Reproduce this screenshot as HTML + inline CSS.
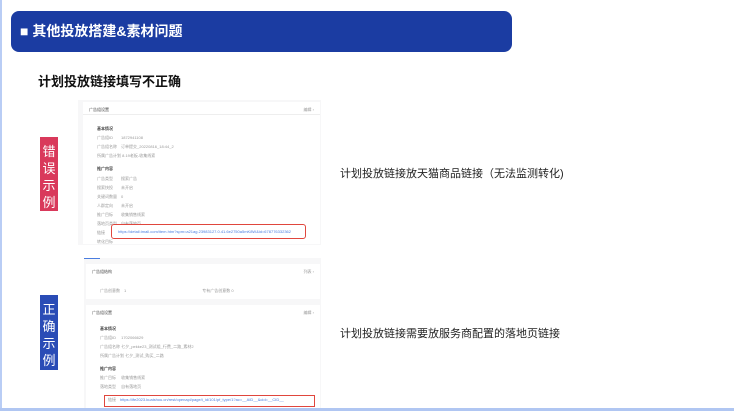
<!DOCTYPE html>
<html><head><meta charset="utf-8"><style>
*{margin:0;padding:0;box-sizing:border-box}
body{width:734px;height:411px;position:relative;background:#fff;overflow:hidden;font-family:"Liberation Sans","Noto Sans CJK SC",sans-serif}
.abs{position:absolute}
.hdr{left:11px;top:11px;width:501px;height:41px;background:#1b3ca2;border-radius:8px;color:#fff;font-weight:bold;font-size:14px;line-height:41px;padding-left:9px}
.sub{left:38px;top:71px;font-size:13px;font-weight:bold;color:#111}
.lab{width:18px;color:#fff;font-size:13px;line-height:17px;text-align:center;padding-top:6px}
.shot{background:#f7f7f8;font-size:4px;color:#888}
.card{position:absolute;background:#fff}
.r{position:absolute;font-size:4px;color:#999;white-space:nowrap}
.d{color:#444}
.t{position:absolute;font-size:11px;color:#222;left:340px}
</style></head><body>
<div class="abs" style="left:0;top:0;width:2px;height:411px;background:#b9cdf5"></div>
<div class="abs" style="left:0;top:408px;width:734px;height:3px;background:#b0c6f2"></div>
<div class="abs hdr">■ 其他投放搭建&amp;素材问题</div>
<div class="abs sub">计划投放链接填写不正确</div>

<div class="abs lab" style="left:40px;top:137px;height:74px;background:#d9395b">错<br>误<br>示<br>例</div>
<div class="abs shot" style="left:78px;top:100px;width:243px;height:145px">
 <div class="card" style="left:5px;top:2px;width:237px;height:142px">
  <div class="r d" style="left:6px;top:5px">广告组设置</div><div class="r" style="right:6px;top:5px">编辑 ›</div>
  <div class="abs" style="left:0;top:12px;width:237px;height:1px;background:#eee"></div>
  <div class="r d" style="left:14px;top:24px;font-weight:bold">基本情况</div>
  <div class="r" style="left:14px;top:33px">广告组ID　　1872941108</div>
  <div class="r" style="left:14px;top:42px">广告组名称　订单提交_20220816_18:44_2</div>
  <div class="r" style="left:14px;top:51px">所属广告计划 8.19老板-收集线索</div>
  <div class="r d" style="left:14px;top:64px;font-weight:bold">推广内容</div>
  <div class="r" style="left:14px;top:74px">广告类型　　搜索广告</div>
  <div class="r" style="left:14px;top:83px">搜索快投　　未开启</div>
  <div class="r" style="left:14px;top:92px">关键词数量　0</div>
  <div class="r" style="left:14px;top:101px">人群定向　　未开启</div>
  <div class="r" style="left:14px;top:110px">推广目标　　收集销售线索</div>
  <div class="r" style="left:14px;top:119px">落地页类型　自有落地页</div>
  <div class="r" style="left:14px;top:128px">链接</div>
  <div class="r" style="left:14px;top:137px">转化目标</div>
 </div>
 <div class="abs" style="left:33px;top:124px;width:195px;height:15px;border:1.5px solid #e0463d;border-radius:3px;background:#fff"></div>
 <div class="r" style="left:40px;top:129px;color:#4a7de0">https://detail.tmall.com/item.htm?spm=a21ag.23983127.0.41.6e2750a5mK8W&id=678776332362</div>
</div>

<div class="abs lab" style="left:40px;top:295px;height:75px;background:#2a4cb6">正<br>确<br>示<br>例</div>
<div class="abs shot" style="left:84px;top:258px;width:237px;height:150px">
 <div class="abs" style="left:0;top:0;width:16px;height:1px;background:#4a7de0"></div>
 <div class="card" style="left:2px;top:6px;width:234px;height:35px">
  <div class="r d" style="left:6px;top:5px">广告组结构</div><div class="r" style="right:6px;top:5px">列表 ›</div>
  <div class="r" style="left:14px;top:24px">广告创意数　1　　　　　　　　　　　　　　　　　　　专有广告创意数 0</div>
 </div>
 <div class="card" style="left:2px;top:47px;width:234px;height:103px">
  <div class="r d" style="left:6px;top:5px">广告组设置</div><div class="r" style="right:6px;top:5px">编辑 ›</div>
  <div class="r d" style="left:14px;top:21px;font-weight:bold">基本情况</div>
  <div class="r" style="left:14px;top:30px">广告组ID　 1702066629</div>
  <div class="r" style="left:14px;top:39px">广告组名称 七夕_pekke23_测试组_行费_二路_素材2</div>
  <div class="r" style="left:14px;top:48px">所属广告计划 七夕_测试_购买_二路</div>
  <div class="r d" style="left:14px;top:61px;font-weight:bold">推广内容</div>
  <div class="r" style="left:14px;top:70px">推广目标　 收集销售线索</div>
  <div class="r" style="left:14px;top:79px">落地类型　 自有落地页</div>
 </div>
 <div class="abs" style="left:20px;top:137px;width:211px;height:12px;border:1.5px solid #e0463d;background:#fff"></div>
 <div class="r" style="left:24px;top:139px">链接　<span style="color:#4a7de0">https://ife2023.kuaishou.cn/rest/openapi/page/i_id/101/pf_type/1?ac=__AID__&cid=__CID__</span></div>
</div>

<div class="t" style="top:165px">计划投放链接放天猫商品链接（无法监测转化)</div>
<div class="t" style="top:325px">计划投放链接需要放服务商配置的落地页链接</div>
</body></html>
